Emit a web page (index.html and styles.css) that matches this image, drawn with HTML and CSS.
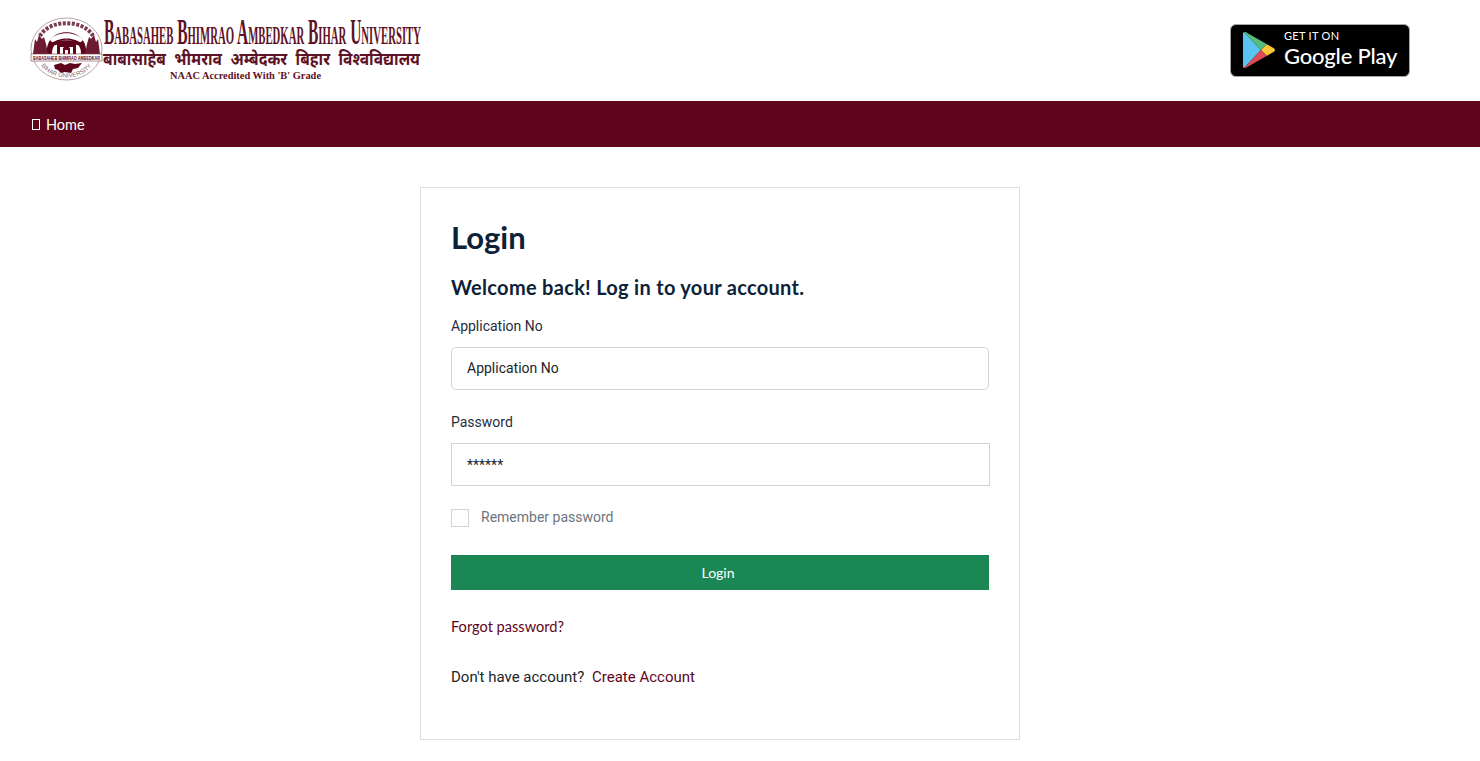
FILE: index.html
```html
<!DOCTYPE html>
<html lang="en">
<head>
  <meta charset="UTF-8" />
  <title>Login</title>
  <link rel="stylesheet" href="styles.css">
</head>
<body>
  <header class="top-bar">
    <a class="logo" href="#">
      <svg class="seal" width="73" height="64" viewBox="0 0 73 64">
        <defs>
          <path id="sealBottom" d="M9 44C17 66 56 66 64 44"/>
        </defs>
        <!-- outer ring -->
        <ellipse cx="36.500" cy="32" rx="35.500" ry="31" fill="#fff" stroke="#a58b93" stroke-width=".8"/>
        <path d="M10 19C19 2 54 2 63 19" fill="none" stroke="#7d3c4d" stroke-width="4" stroke-dasharray="3 1.500"/>
        <!-- dome and temple -->
        <path d="M17 37C14 8 59 8 56 37h-5C52 18 21 18 22 37z" fill="#5e051c"/>
        <path d="M20 23c6-9 27-9 33 0l-3 3c-5-6-22-6-27 0z" fill="#fff"/>
        <path d="M19 27c6-5 29-5 35 0l-1 3c-6-4-27-4-33 0z" fill="#5e051c"/>
        <path d="M27 37V27h19v10h-3V30H30v7z" fill="#5e051c"/>
        <path d="M33 37v-6l3.500-3 3.500 3v6h-2v-4h-3v4z" fill="#5e051c"/>
        <!-- figures at the sides -->
        <path d="M3 37l2-15 2 3 2-7 3 4 2-2 2 7 2 10z" fill="#6b1c30"/>
        <path d="M70 37l-2-15-2 3-2-7-3 4-2-2-2 7-2 10z" fill="#6b1c30"/>
        <!-- banner -->
        <path d="M1 37h71v7H1z" fill="#fff" stroke="#7d3c4d" stroke-width=".6"/>
        <text class="seal-banner" x="3" y="42.500" textLength="67" lengthAdjust="spacingAndGlyphs">BABASAHEB BHIMRAO AMBEDKAR</text>
        <!-- plants under the banner -->
        <path d="M24 48l7-2 4 2 5-2 5 1 7-1-4 5-5 1-2 4-6-1-4 1-3-3-3-1z" fill="#5e051c"/>
        <text class="seal-arc"><textPath href="#sealBottom" startOffset="7%" textLength="58" lengthAdjust="spacingAndGlyphs">BIHAR UNIVERSITY</textPath></text>
      </svg>
      <svg class="wordmark" width="320" height="66" viewBox="0 0 320 66">
        <text class="wm-name" x="1" y="28" textLength="317" lengthAdjust="spacingAndGlyphs">Babasaheb Bhimrao Ambedkar Bihar University</text>
        <text class="wm-hindi" x="0" y="49" textLength="317" lengthAdjust="spacingAndGlyphs">बाबासाहेब भीमराव अम्बेदकर बिहार विश्वविद्यालय</text>
        <text class="wm-naac" x="67" y="63" textLength="151" lengthAdjust="spacingAndGlyphs">NAAC Accredited With 'B' Grade</text>
      </svg>
    </a>
    <a class="play-badge" href="#">
      <svg width="32" height="36" viewBox="0 0 32 36">
        <path d="M1 0C.4.400 0 1 0 2v32c0 1 .4 1.600 1 2l17-18z" fill="#5ac3ef"/>
        <path d="M1 0c.6-.2 1.300-.1 2 .3l21 12L18 18z" fill="#55bb7d"/>
        <path d="M1 36c.6.2 1.300.1 2-.3l21-12L18 18z" fill="#dd4a55"/>
        <path d="M18 18l6-5.700 6.500 3.700c2 1.200 2 2.800 0 4L24 23.700z" fill="#f9c735"/>
      </svg>
      <span class="play-text">
        <span class="play-small">GET IT ON</span>
        <span class="play-big">Google Play</span>
      </span>
    </a>
  </header>

  <nav class="main-nav">
    <a href="#"><span class="nav-icon"></span>Home</a>
  </nav>

  <main class="page">
    <form class="login-card">
      <h1>Login</h1>
      <h2>Welcome back! Log in to your account.</h2>

      <label class="field-label" for="appNo">Application No</label>
      <input class="field" id="appNo" type="text" value="Application No">

      <label class="field-label" for="pass">Password</label>
      <input class="field field-wide" id="pass" type="text" value="******">

      <label class="remember">
        <span class="check"></span>
        <span class="remember-text">Remember password</span>
      </label>

      <button class="login-btn" type="button">Login</button>

      <p class="forgot"><a href="#">Forgot password?</a></p>
      <p class="signup">Don't have account? <a href="#">Create Account</a></p>
    </form>
  </main>
</body>
</html>
```
FILE: styles.css
```css
body {
  margin: 0;
  font-family: 'Roboto', sans-serif;
  font-size: 14px;
  color: #212529;
  background: #fff;
}

a {
  text-decoration: none;
}

.top-bar {
  height: 101px;
  display: flex;
  justify-content: space-between;
  align-items: center;
  padding: 0 70px 0 30px;
  box-sizing: border-box;
}

.logo {
  display: flex;
  align-items: flex-start;
  margin-top: -3px;
}

.seal {
  margin-top: 1px;
  overflow: visible;
}

.wordmark {
  overflow: visible;
}

.wm-name {
  font-family: 'Liberation Serif', serif;
  font-size: 36px;
  font-weight: 700;
  font-variant: small-caps;
  fill: #5e1226;
}

.wm-hindi {
  font-family: 'Noto Sans', 'DejaVu Sans', sans-serif;
  font-size: 18px;
  font-weight: 700;
  word-spacing: 5px;
  fill: #5e1226;
}

.wm-naac {
  font-family: 'Liberation Serif', serif;
  font-size: 10px;
  font-weight: 700;
  fill: #5e1226;
}

.seal-banner {
  font-family: 'Liberation Sans', sans-serif;
  font-size: 4.500px;
  font-weight: 700;
  fill: #5e051c;
}

.seal-arc {
  font-family: 'Liberation Sans', sans-serif;
  font-size: 6px;
  fill: #8d6a75;
}

.play-badge {
  width: 180px;
  height: 53px;
  box-sizing: border-box;
  display: flex;
  align-items: center;
  gap: 9px;
  padding-left: 12px;
  background: #000;
  border: 1px solid #a6a6a6;
  border-radius: 6px;
  color: #fff;
}

.play-badge svg {
  margin-top: -1px;
}

.play-text {
  display: flex;
  flex-direction: column;
  margin-top: -3px;
  font-family: 'Lato', sans-serif;
}

.play-small {
  font-size: 11px;
  line-height: 12px;
  letter-spacing: 0.3px;
}

.play-big {
  font-size: 22px;
  line-height: 27px;
  letter-spacing: -0.2px;
  font-weight: 500;
}

.main-nav {
  height: 46px;
  display: flex;
  align-items: center;
  padding-left: 32px;
  background: #5e051c;
}

.main-nav a {
  display: flex;
  align-items: center;
  color: #fff;
  font-family: 'Lato', sans-serif;
  font-size: 14.500px;
}

.nav-icon {
  width: 6px;
  height: 9px;
  margin-right: 6px;
  border: 1px solid #fff;
}

.page {
  max-width: 1440px;
  padding: 40px 0 21px;
}

.login-card {
  width: 600px;
  height: 553px;
  box-sizing: border-box;
  margin: 0 auto;
  padding: 30px;
  border: 1px solid #ddd;
}

h1 {
  margin: -2px 0 0;
  font-family: 'Lato', sans-serif;
  font-size: 31px;
  line-height: 42px;
  font-weight: 700;
  color: #0d2238;
}

h2 {
  margin: 15px 0 0;
  font-family: 'Lato', sans-serif;
  font-size: 20px;
  line-height: 28px;
  font-weight: 700;
  letter-spacing: 0.3px;
  color: #0d2238;
}

.field-label {
  display: block;
  margin-top: 15px;
  line-height: 20px;
  color: #1f2d3d;
}

.field {
  display: block;
  width: 538px;
  height: 43px;
  box-sizing: border-box;
  margin-top: 11px;
  padding: 0 15px 2px;
  border: 1px solid #ced4da;
  border-radius: 5px;
  font-family: inherit;
  font-size: 14px;
  color: #212529;
}

.field-wide {
  width: 539px;
  padding-bottom: 0;
  border-radius: 0;
}

.field + .field-label {
  margin-top: 22px;
}

.remember {
  display: flex;
  align-items: center;
  gap: 12px;
  margin-top: 23px;
  color: #6c757d;
  line-height: 18px;
}

.remember-text {
  margin-top: -2px;
}

.check {
  width: 18px;
  height: 18px;
  box-sizing: border-box;
  border: 1px solid #ced4da;
}

.login-btn {
  display: block;
  width: 538px;
  height: 35px;
  margin-top: 28px;
  padding: 0 4px 1px 0;
  border: 0;
  background: #1a8755;
  color: #fff;
  font-family: 'Lato', sans-serif;
  font-size: 14px;
}

.forgot {
  margin: 27px 0 0;
  font-family: 'Lato', sans-serif;
  font-size: 14.600px;
  line-height: 20px;
}

.forgot a,
.signup a {
  color: #5e051c;
}

.signup {
  margin: 30px 0 0;
  font-size: 15px;
  line-height: 20px;
  color: #212529;
}

.signup a {
  margin-left: 4px;
}
```
